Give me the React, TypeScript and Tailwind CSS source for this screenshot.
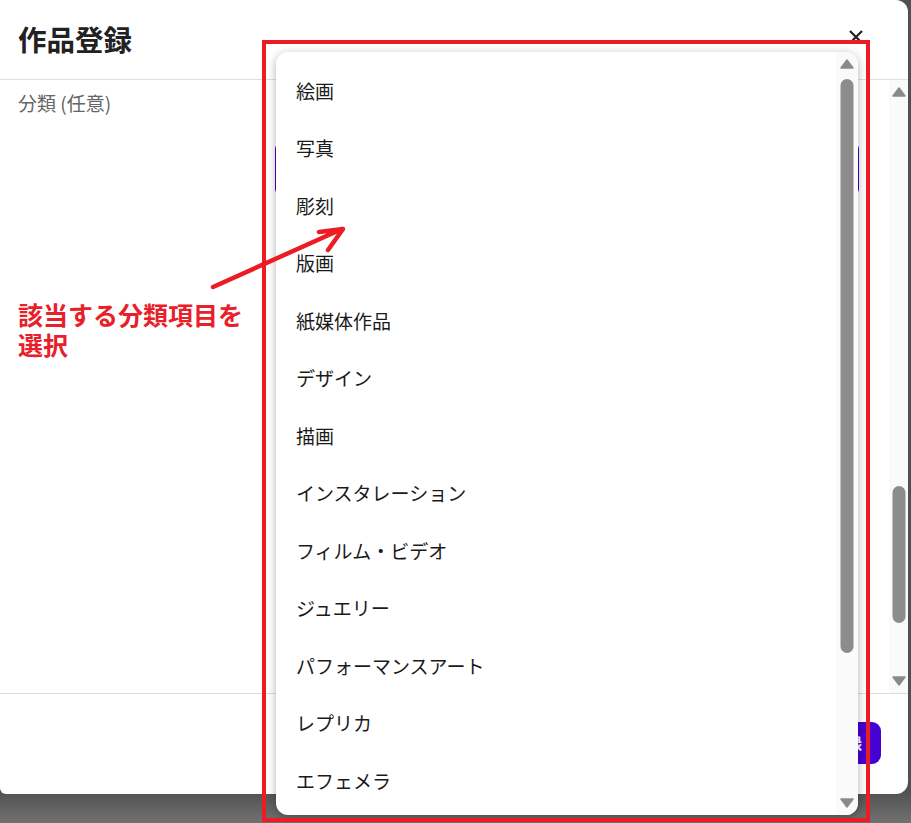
import * as React from "react"

const categories = [
  "絵画",
  "写真",
  "彫刻",
  "版画",
  "紙媒体作品",
  "デザイン",
  "描画",
  "インスタレーション",
  "フィルム・ビデオ",
  "ジュエリー",
  "パフォーマンスアート",
  "レプリカ",
  "エフェメラ",
]

const font = { fontFamily: '"Noto Sans CJK JP", "Noto Sans", sans-serif' }

const Arrow = ({ down }: { down?: boolean }) => (
  <svg viewBox="0 0 14 10" className="h-[10px] w-[14px]">
    <path d={down ? "M1 1H13L7 9Z" : "M7 1L13 9H1Z"} fill="#8a8a8a" strokeLinejoin="round" stroke="#8a8a8a" strokeWidth="1.5" />
  </svg>
)

const Scrollbar = ({ thumbTop, thumbHeight }: { thumbTop: number; thumbHeight: number }) => (
  <div className="relative flex h-full w-full flex-col items-center justify-between bg-[#fafafa] py-[7px]">
    <Arrow />
    <div
      className="absolute left-1/2 w-[13px] -translate-x-1/2 rounded-full bg-[#8c8c8c]"
      style={{ top: thumbTop, height: thumbHeight }}
    />
    <Arrow down />
  </div>
)

export default function App() {
  return (
    <div
      className="relative h-[823px] w-[911px] overflow-hidden bg-[linear-gradient(to_bottom,#505050_96%,#717171_100%)]"
      style={font}
    >
      {/* modal */}
      <div className="flex h-[794px] w-[908px] flex-col rounded-r-[12px] rounded-bl-[6px] bg-white">
        <div className="flex h-[80px] shrink-0 items-center justify-between border-b border-[#e0e0e0] pl-[18px] pr-[44px]">
          <h2 className="text-[28.5px] font-bold leading-none text-[#222]">作品登録</h2>
          <svg viewBox="0 0 16 16" className="mb-[6px] h-[16px] w-[16px]">
            <path d="M2 2L14 14M14 2L2 14" stroke="#222" strokeWidth="2.2" />
          </svg>
        </div>

        <div className="flex min-h-0 flex-1">
          <div className="flex flex-1 flex-col pl-[18px] pt-[10px]">
            <label className="text-[19px] leading-[26px] text-[#666]">分類 (任意)</label>
            <div className="ml-[257px] mr-[30px] mt-[27px] h-[52px] rounded-[6px] border-2 border-[#4400cc]" />
          </div>
          <div className="w-[19px]">
            <Scrollbar thumbTop={406} thumbHeight={137} />
          </div>
        </div>

        <div className="flex h-[101px] shrink-0 items-center justify-end border-t border-[#dcdcdc] pr-[27px]">
          <button className="mb-[3px] h-[42px] rounded-[9px] bg-[#4600d2] pl-[22px] pr-[19px] text-[16px] font-bold text-white">
            登録
          </button>
        </div>
      </div>

      {/* native select popup */}
      <div className="absolute left-[276px] top-[52px] flex h-[763px] w-[582px] overflow-hidden rounded-[12px] bg-white shadow-[0_2px_10px_rgba(0,0,0,0.3)]">
        <ul className="flex-1 pt-[10px]">
          {categories.map((c) => (
            <li key={c} className="flex h-[57.5px] items-center pl-[20px] text-[19px] text-[#1a1a1a]">
              {c}
            </li>
          ))}
        </ul>
        <div className="w-[22px]">
          <Scrollbar thumbTop={27} thumbHeight={574} />
        </div>
      </div>

      {/* annotation */}
      <div className="pointer-events-none absolute left-[262px] top-[40px] h-[782px] w-[608px] border-[4px] border-[#ec1c24]" />
      <svg className="pointer-events-none absolute left-0 top-0" width="911" height="823">
        <path
          d="M213 287L342 229M319 232L343 229L328 250"
          stroke="#ec1c24"
          strokeWidth="4.5"
          strokeLinecap="round"
          strokeLinejoin="round"
          fill="none"
        />
      </svg>
      <div className="absolute left-[18px] top-[299px] text-[25px] font-bold text-[#e8202a]">
        <p className="h-[30px] overflow-visible leading-[30px]">該当する分類項目を</p>
        <p className="h-[30px] overflow-visible leading-[30px]">選択</p>
      </div>
    </div>
  )
}
